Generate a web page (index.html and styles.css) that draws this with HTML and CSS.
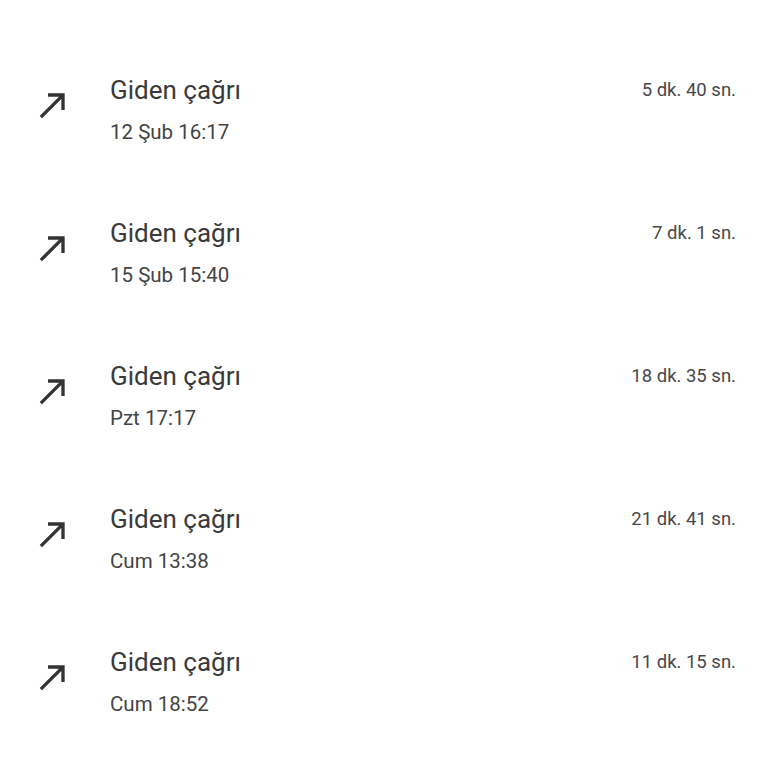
FILE: index.html
```html
<!DOCTYPE html>
<html lang="tr">
<head>
    <meta charset="UTF-8">
    <meta name="viewport" content="width=device-width, initial-scale=1.0">
    <title>Arama geçmişi</title>
    <link rel="stylesheet" href="styles.css">
</head>
<body>
    <ul class="call-list">
        <li class="call-row">
            <svg class="call-icon" viewBox="0 0 24 24"><path d="M9 5v2h6.59L4 18.59 5.41 20 17 8.41V15h2V5z"/></svg>
            <div class="call-info">
                <div class="call-title">Giden çağrı</div>
                <div class="call-date">10 Şub 11:02</div>
            </div>
            <div class="call-duration">3 dk. 12 sn.</div>
        </li>
        <li class="call-row">
            <svg class="call-icon" viewBox="0 0 24 24"><path d="M9 5v2h6.59L4 18.59 5.41 20 17 8.41V15h2V5z"/></svg>
            <div class="call-info">
                <div class="call-title">Giden çağrı</div>
                <div class="call-date">12 Şub 16:17</div>
            </div>
            <div class="call-duration">5 dk. 40 sn.</div>
        </li>
        <li class="call-row">
            <svg class="call-icon" viewBox="0 0 24 24"><path d="M9 5v2h6.59L4 18.59 5.41 20 17 8.41V15h2V5z"/></svg>
            <div class="call-info">
                <div class="call-title">Giden çağrı</div>
                <div class="call-date">15 Şub 15:40</div>
            </div>
            <div class="call-duration">7 dk. 1 sn.</div>
        </li>
        <li class="call-row">
            <svg class="call-icon" viewBox="0 0 24 24"><path d="M9 5v2h6.59L4 18.59 5.41 20 17 8.41V15h2V5z"/></svg>
            <div class="call-info">
                <div class="call-title">Giden çağrı</div>
                <div class="call-date">Pzt 17:17</div>
            </div>
            <div class="call-duration">18 dk. 35 sn.</div>
        </li>
        <li class="call-row">
            <svg class="call-icon" viewBox="0 0 24 24"><path d="M9 5v2h6.59L4 18.59 5.41 20 17 8.41V15h2V5z"/></svg>
            <div class="call-info">
                <div class="call-title">Giden çağrı</div>
                <div class="call-date">Cum 13:38</div>
            </div>
            <div class="call-duration">21 dk. 41 sn.</div>
        </li>
        <li class="call-row">
            <svg class="call-icon" viewBox="0 0 24 24"><path d="M9 5v2h6.59L4 18.59 5.41 20 17 8.41V15h2V5z"/></svg>
            <div class="call-info">
                <div class="call-title">Giden çağrı</div>
                <div class="call-date">Cum 18:52</div>
            </div>
            <div class="call-duration">11 dk. 15 sn.</div>
        </li>
    </ul>
</body>
</html>
```

FILE: styles.css
```css
html, body {
    margin: 0;
    height: 100%;
    overflow: hidden;
    background: #fff;
}
body {
    font-family: Roboto, "Noto Sans", sans-serif;
    color: #3c3c3c;
}
.call-list {
    list-style: none;
    margin: -103px 0 0 0;
    padding: 0;
}
.call-row {
    display: flex;
    align-items: flex-start;
    height: 143px;
    box-sizing: border-box;
    padding: 33px 32px 0 33px;
}
.call-icon {
    width: 40px;
    height: 40px;
    margin-top: 12px;
    margin-right: 37px;
    fill: #333;
    flex-shrink: 0;
}
.call-info {
    flex: 1;
}
.call-title {
    font-size: 26px;
    line-height: 34px;
    color: #3a3a3a;
}
.call-date {
    font-size: 20.5px;
    line-height: 30px;
    margin-top: 10px;
    color: #444;
}
.call-duration {
    font-size: 18.5px;
    line-height: 34px;
    color: #484848;
}
```
